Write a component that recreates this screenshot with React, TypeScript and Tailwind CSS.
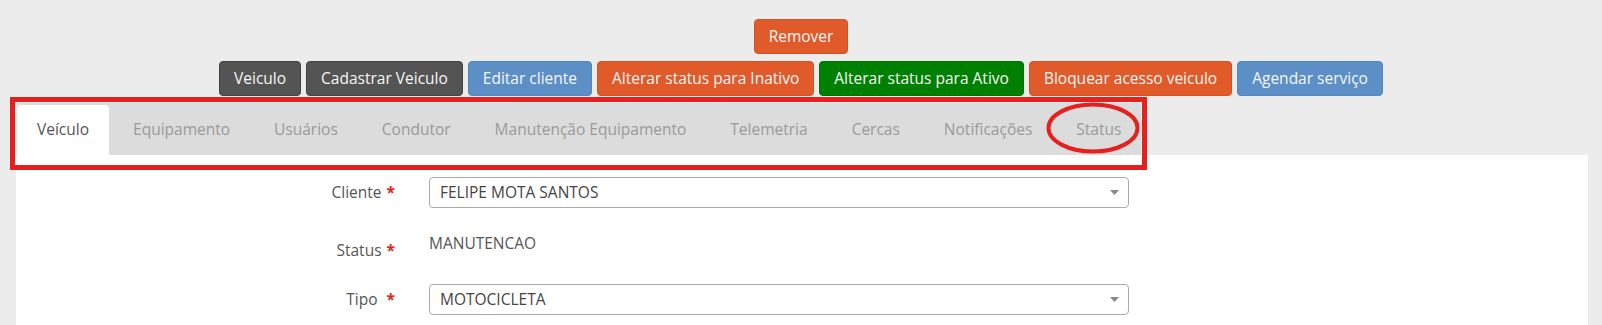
import React from "react";

const BUTTONS: { label: string; cls: string }[] = [
  { label: "Veiculo", cls: "bg-[#545454] border-[#444]" },
  { label: "Cadastrar Veiculo", cls: "bg-[#545454] border-[#444]" },
  { label: "Editar cliente", cls: "bg-[#5b8fc6] border-[#5586bb]" },
  { label: "Alterar status para Inativo", cls: "bg-[#e05a2a] border-[#d65226]" },
  { label: "Alterar status para Ativo", cls: "bg-[#008000] border-[#007400]" },
  { label: "Bloquear acesso veiculo", cls: "bg-[#e05a2a] border-[#d65226]" },
  { label: "Agendar serviço", cls: "bg-[#5b8fc6] border-[#5586bb]" },
];

const TABS = [
  "Veículo",
  "Equipamento",
  "Usuários",
  "Condutor",
  "Manutenção Equipamento",
  "Telemetria",
  "Cercas",
  "Notificações",
  "Status",
];

function Caret() {
  return (
    <svg width="9" height="5" viewBox="0 0 9 5" className="shrink-0">
      <path d="M0 0h9L4.5 5z" fill="#888" />
    </svg>
  );
}

function Select({ value }: { value: string }) {
  return (
    <div className="flex h-[31px] w-[700px] items-center justify-between rounded-[4px] border border-[#aaa] bg-white pl-[10px] pr-[9px] text-[15.5px] text-[#444]">
      <span>{value}</span>
      <Caret />
    </div>
  );
}

function Label({ text, extraSpace }: { text: string; extraSpace?: boolean }) {
  return (
    <div className="w-[379px] text-right text-[15.5px] text-[#555]">
      {text}
      {extraSpace ? " " : ""}
      <span className="ml-[5px] font-bold text-[#e41e1e]">*</span>
    </div>
  );
}

export default function App() {
  return (
    <div
      className="h-[325px] overflow-hidden bg-[#ececec]"
      style={{ fontFamily: '"Open Sans", "Liberation Sans", sans-serif' }}
    >
      {/* top action */}
      <div className="flex justify-center pt-[19px]">
        <button className="h-[35px] rounded-[4px] border border-[#d65226] bg-[#e05a2a] px-[14px] text-[15.5px] text-[#f6f6f6]">
          Remover
        </button>
      </div>

      {/* action buttons */}
      <div className="mt-[7px] flex justify-center gap-[5px]">
        {BUTTONS.map((b) => (
          <button
            key={b.label}
            className={`h-[35px] rounded-[4px] border px-[14px] text-[15.5px] text-[#f6f6f6] ${b.cls}`}
          >
            {b.label}
          </button>
        ))}
      </div>

      {/* tabs */}
      <div className="relative z-10 ml-[17px] mt-[5px] w-fit">
        <ul className="flex gap-[4px] border-t-2 border-[#efefef] bg-[#dcdcdc] pt-[2px]">
          {TABS.map((t, i) => (
            <li
              key={t}
              className={`flex h-[50px] items-center rounded-t-[4px] px-[20px] text-[15.5px] ${
                i === 0 ? "bg-white text-[#555]" : "text-[#9a9a9a]"
              }`}
            >
              {t}
            </li>
          ))}
        </ul>
        <div className="pointer-events-none absolute -bottom-[15px] -left-[7px] -right-[6px] -top-[4px] border-[5px] border-[#e6201f]" />
        <svg
          className="pointer-events-none absolute right-[1px] top-[1px]"
          width="94"
          height="52"
          viewBox="0 0 94 52"
        >
          <ellipse cx="47" cy="26" rx="44.5" ry="23.5" fill="none" stroke="#e6201f" strokeWidth="4" />
        </svg>
      </div>

      {/* form panel */}
      <div className="ml-4 mr-[14px] h-[200px] bg-white pt-[22px]">
        <div className="flex items-center gap-[34px]">
          <Label text="Cliente" />
          <Select value="FELIPE MOTA SANTOS" />
        </div>

        <div className="mt-[24px] flex h-[28px] items-start gap-[34px]">
          <div className="pt-[7px]">
            <Label text="Status" />
          </div>
          <div className="text-[15.5px] text-[#555]">MANUTENCAO</div>
        </div>

        <div className="mt-[24px] flex items-center gap-[34px]">
          <Label text="Tipo" extraSpace />
          <Select value="MOTOCICLETA" />
        </div>
      </div>
    </div>
  );
}
